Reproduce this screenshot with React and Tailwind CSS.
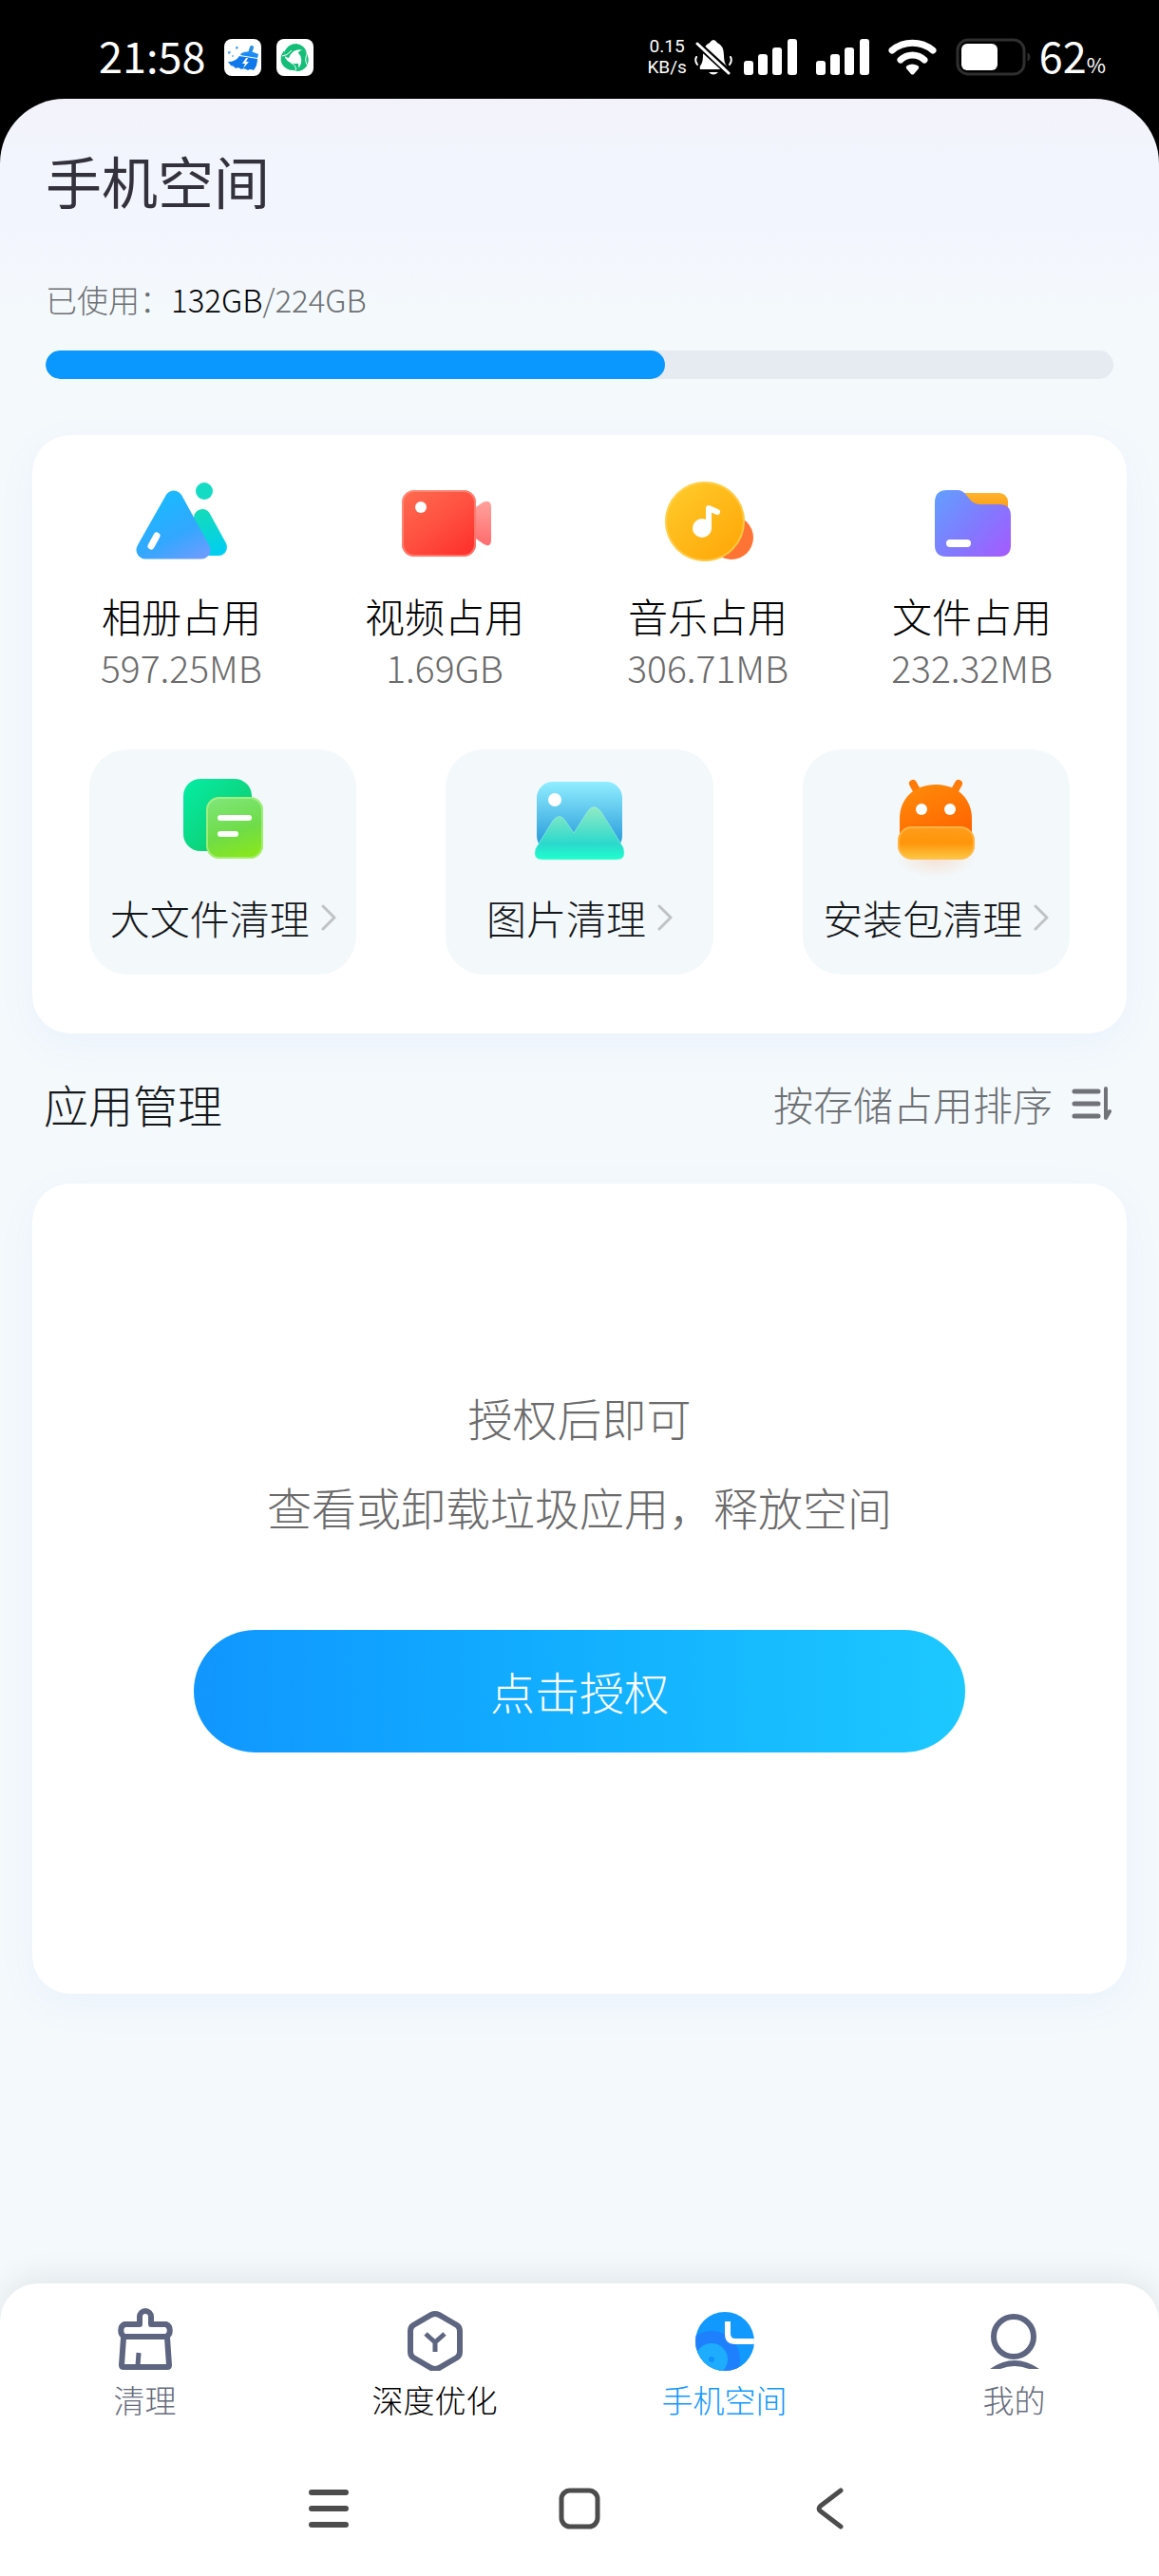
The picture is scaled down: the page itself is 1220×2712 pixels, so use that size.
import React, { useState } from "react";

const STORAGE = { used: 132, total: 224, percent: 58 };

function AlbumIcon() {
  return (
    <svg viewBox="0 0 96 82" className="h-[82px] w-24 overflow-visible" aria-hidden="true">
      <defs>
        <linearGradient id="albumBlue" gradientUnits="userSpaceOnUse" x1="28" y1="8" x2="66" y2="82">
          <stop offset="0" stopColor="#16bbff" />
          <stop offset="0.6" stopColor="#33a7ff" />
          <stop offset="1" stopColor="#6d9cff" />
        </linearGradient>
        <linearGradient id="albumGreen" gradientUnits="userSpaceOnUse" x1="70" y1="28" x2="88" y2="78">
          <stop offset="0" stopColor="#14dcb8" />
          <stop offset="1" stopColor="#00cdf5" />
        </linearGradient>
      </defs>
      <circle cx="72" cy="9" r="9" fill="#14dcc4" />
      <path d="M70 37L87 68H72Z" fill="url(#albumGreen)" stroke="url(#albumGreen)" strokeWidth="18" strokeLinejoin="round" />
      <path d="M40 18L10 71H69Z" fill="url(#albumBlue)" stroke="url(#albumBlue)" strokeWidth="19" strokeLinejoin="round" />
      <path d="M22 56L16 67" stroke="#fff" strokeWidth="7" strokeLinecap="round" />
    </svg>
  );
}

function VideoIcon() {
  return (
    <svg viewBox="0 0 96 82" className="h-[82px] w-24 overflow-visible" aria-hidden="true">
      <defs>
        <linearGradient id="videoBody" x1="0.1" y1="0" x2="0.9" y2="1">
          <stop offset="0" stopColor="#ff6a4f" />
          <stop offset="0.5" stopColor="#ff5040" />
          <stop offset="1" stopColor="#fd2f2b" />
        </linearGradient>
        <linearGradient id="videoLens" x1="0" y1="0" x2="0" y2="1">
          <stop offset="0" stopColor="#ffa19b" />
          <stop offset="1" stopColor="#ff6c6e" />
        </linearGradient>
      </defs>
      <path d="M78 28L88 21Q97 17 97 26V60Q97 70 88 64L78 57Z" fill="url(#videoLens)" />
      <rect x="3" y="8" width="78" height="70" rx="13" fill="url(#videoBody)" />
      <rect x="4" y="9" width="76" height="68" rx="12" fill="none" stroke="#ff9c8f" strokeOpacity="0.6" strokeWidth="2" />
      <circle cx="23" cy="26" r="6" fill="#fff" />
    </svg>
  );
}

function MusicIcon() {
  return (
    <svg viewBox="0 0 96 82" className="h-[82px] w-24 overflow-visible" aria-hidden="true">
      <defs>
        <linearGradient id="musicDisc" x1="0.1" y1="0.1" x2="0.8" y2="0.9">
          <stop offset="0" stopColor="#ffc928" />
          <stop offset="1" stopColor="#ffaa0b" />
        </linearGradient>
      </defs>
      <circle cx="73" cy="58" r="23" fill="#ff7434" />
      <circle cx="45" cy="41" r="42" fill="url(#musicDisc)" />
      <circle cx="45" cy="41" r="41" fill="none" stroke="#ffd966" strokeOpacity="0.6" strokeWidth="2" />
      <circle cx="42" cy="48" r="10" fill="#fff" />
      <path d="M49 48V27L58 31" fill="none" stroke="#fff" strokeWidth="6" strokeLinejoin="round" strokeLinecap="round" />
    </svg>
  );
}

function FileIcon() {
  return (
    <svg viewBox="0 0 96 82" className="h-[82px] w-24 overflow-visible" aria-hidden="true">
      <defs>
        <linearGradient id="fileFront" x1="0" y1="0.1" x2="1" y2="0.9">
          <stop offset="0" stopColor="#649cff" />
          <stop offset="0.55" stopColor="#8279ff" />
          <stop offset="1" stopColor="#a35cff" />
        </linearGradient>
        <linearGradient id="fileBack" x1="0" y1="0" x2="0" y2="1">
          <stop offset="0" stopColor="#ffb42c" />
          <stop offset="1" stopColor="#f58a06" />
        </linearGradient>
      </defs>
      <rect x="32" y="11" width="54" height="30" rx="9" fill="url(#fileBack)" />
      <path
        d="M9 21Q9 8 22 8H33Q38 8 42 13L47 19Q51 23 57 23H77Q89 23 89 35V66Q89 78 77 78H21Q9 78 9 66Z"
        fill="url(#fileFront)"
      />
      <rect x="21" y="60" width="26" height="8" rx="4" fill="#fff" />
    </svg>
  );
}

function BigFileIcon() {
  return (
    <svg viewBox="0 0 96 84" className="h-[84px] w-24 overflow-visible" aria-hidden="true">
      <defs>
        <linearGradient id="bigBack" x1="0" y1="0.1" x2="0.9" y2="1">
          <stop offset="0" stopColor="#06eba2" />
          <stop offset="1" stopColor="#10c666" />
        </linearGradient>
        <linearGradient id="bigFront" x1="0.2" y1="0" x2="0.5" y2="1">
          <stop offset="0" stopColor="#7ee678" />
          <stop offset="0.6" stopColor="#6fdc48" />
          <stop offset="1" stopColor="#86e620" />
        </linearGradient>
      </defs>
      <rect x="6" y="0" width="72" height="76" rx="18" fill="url(#bigBack)" />
      <rect x="30" y="19" width="60" height="65" rx="14" fill="url(#bigFront)" />
      <rect x="31" y="20" width="58" height="63" rx="13" fill="none" stroke="#b2f48c" strokeOpacity="0.7" strokeWidth="2" />
      <path d="M45 41H75M45 58H61" stroke="#fff" strokeWidth="6" strokeLinecap="round" />
    </svg>
  );
}

function PictureIcon() {
  return (
    <svg viewBox="0 0 96 84" className="h-[84px] w-24 overflow-visible" aria-hidden="true">
      <defs>
        <linearGradient id="picSky" x1="0" y1="0" x2="0" y2="1">
          <stop offset="0" stopColor="#90eeff" />
          <stop offset="0.45" stopColor="#5cc4ec" />
          <stop offset="0.85" stopColor="#2b9fdc" />
          <stop offset="1" stopColor="#2b9fdc" />
        </linearGradient>
        <linearGradient id="picHill" x1="0" y1="0" x2="0" y2="1">
          <stop offset="0" stopColor="#92eac4" />
          <stop offset="0.7" stopColor="#2bd9cd" />
          <stop offset="1" stopColor="#1effcd" />
        </linearGradient>
      </defs>
      <rect x="3" y="3" width="90" height="74" rx="17" fill="url(#picSky)" />
      <circle cx="22" cy="22" r="7" fill="#fff" />
      <path
        d="M2 73L20 44Q27 35 33 44L42 57L56 35Q63 24 71 35L94 72Q98 85 87 85H9Q-2 85 2 73Z"
        fill="url(#picHill)"
        stroke="#a6f7de"
        strokeOpacity="0.5"
      />
    </svg>
  );
}

function PackageIcon() {
  return (
    <svg viewBox="0 0 96 84" className="h-[84px] w-24 overflow-visible" aria-hidden="true">
      <defs>
        <linearGradient id="pkgHead" x1="0.2" y1="0" x2="0.8" y2="1">
          <stop offset="0" stopColor="#ff8a0a" />
          <stop offset="1" stopColor="#ff6400" />
        </linearGradient>
        <linearGradient id="pkgBase" x1="0" y1="0" x2="0" y2="1">
          <stop offset="0" stopColor="#ff9d1c" />
          <stop offset="0.5" stopColor="#ff950a" />
          <stop offset="1" stopColor="#fbca45" />
        </linearGradient>
        <radialGradient id="pkgGlow">
          <stop offset="0" stopColor="#ff8a3c" stopOpacity="0.2" />
          <stop offset="1" stopColor="#ff8a3c" stopOpacity="0" />
        </radialGradient>
      </defs>
      <ellipse cx="48" cy="84" rx="42" ry="20" fill="url(#pkgGlow)" />
      <path d="M24 5L29 14M72 5L67 14" stroke="#ff7a08" strokeWidth="8" strokeLinecap="round" />
      <path d="M10 60V42C10 20 26 6 48 6S86 20 86 42V60Z" fill="url(#pkgHead)" />
      <circle cx="33" cy="32" r="6" fill="#fff" />
      <circle cx="63" cy="32" r="6" fill="#fff" />
      <rect x="8" y="50" width="81" height="35" rx="15" fill="url(#pkgBase)" />
      <rect x="9" y="51" width="79" height="33" rx="14" fill="none" stroke="#ffbe55" strokeOpacity="0.7" strokeWidth="2" />
    </svg>
  );
}

function Chevron() {
  return (
    <svg viewBox="0 0 16 28" className="h-7 w-4" fill="none" aria-hidden="true">
      <path d="M2 2L14 14L2 26" stroke="#bfc3c6" strokeWidth="3" strokeLinecap="round" strokeLinejoin="round" />
    </svg>
  );
}

function SortIcon() {
  return (
    <svg viewBox="0 0 42 36" className="h-9 w-[42px]" fill="none" stroke="#707478" strokeLinecap="round" aria-hidden="true">
      <path d="M3 5H28M3 18H28M3 31H28" strokeWidth="5" />
      <path d="M36 2V33L40 26" strokeWidth="4" strokeLinejoin="round" />
    </svg>
  );
}

function CleanIcon() {
  return (
    <svg viewBox="0 0 64 66" className="h-[66px] w-16" fill="none" stroke="currentColor" strokeWidth="6" aria-hidden="true">
      <path d="M26 9V17H10A6 7 0 0 0 10 30H54A6 7 0 0 0 54 17H38V9A6 6 0 0 0 26 9Z" strokeLinejoin="round" />
      <path d="M9 31L7 60Q7 62 9 62H55Q57 62 57 60L55 31" />
      <path d="M25 47L24 61" strokeWidth="5" />
    </svg>
  );
}

function OptimizeIcon() {
  return (
    <svg viewBox="0 0 64 66" className="h-[66px] w-16" fill="none" stroke="currentColor" aria-hidden="true">
      <path
        d="M28 7Q32 5 36 7L55 18Q58 20 58 24V46Q58 50 55 52L36 63Q32 65 28 63L9 52Q6 50 6 46V24Q6 20 9 18Z"
        strokeWidth="6"
      />
      <path d="M22 27L32 36L42 27M32 35V46" strokeWidth="5" />
    </svg>
  );
}

function SpaceIcon() {
  return (
    <svg viewBox="0 0 64 66" className="h-[66px] w-16" aria-hidden="true">
      <defs>
        <clipPath id="spaceDisc">
          <circle cx="32" cy="35" r="31" />
        </clipPath>
      </defs>
      <g clipPath="url(#spaceDisc)">
        <rect width="64" height="66" fill="#1199fe" />
        <circle cx="18" cy="54" r="30" fill="#1f80fd" />
        <circle cx="18" cy="54" r="17" fill="#1eacff" />
        <circle cx="18" cy="54" r="3" fill="#1190fb" />
        <path d="M35 14V27Q35 35 43 35H64" fill="none" stroke="#fff" strokeWidth="6" />
      </g>
    </svg>
  );
}

function MineIcon() {
  return (
    <svg viewBox="0 0 64 66" className="h-[66px] w-16" aria-hidden="true">
      <circle cx="31" cy="30" r="21" fill="none" stroke="currentColor" strokeWidth="6" />
      <path d="M6 64Q32 46 58 64H47Q32 58 17 64Z" fill="currentColor" />
    </svg>
  );
}

function BroomAppIcon() {
  return (
    <svg viewBox="0 0 39 39" className="size-[39px] rounded-lg bg-white" aria-hidden="true">
      <path d="M27 15L29 9" stroke="#2b8fe0" strokeWidth="4" strokeLinecap="round" />
      <path d="M18 15Q26 11 36 16L35 20L17 17Z" fill="#1c8cf5" />
      <path d="M16 18L35 21Q35 28 31 33Q27 31 25 33Q21 30 18 32Q15 29 12 31Q10 28 7 28L4 24Q12 24 16 18Z" fill="#0f79ec" />
      <path d="M23 20L19 26H22L20 31L26 24H23L25 20Z" fill="#fff" />
      <path d="M13 8V11M12 9H15M5 13V16M4 14H7M9 17V19" stroke="#2a93f0" strokeWidth="1" />
    </svg>
  );
}

function SwirlAppIcon() {
  return (
    <svg viewBox="0 0 39 39" className="size-[39px] rounded-lg bg-white" aria-hidden="true">
      <g fill="#14bd78">
        <path d="M8 14Q12 5 21 5Q29 6 32 14Q25 9 18 13Q14 16 13 20Q7 19 8 14Z" />
        <path d="M8 14Q12 5 21 5Q29 6 32 14Q25 9 18 13Q14 16 13 20Q7 19 8 14Z" transform="rotate(120 19.5 20)" />
        <path d="M8 14Q12 5 21 5Q29 6 32 14Q25 9 18 13Q14 16 13 20Q7 19 8 14Z" transform="rotate(240 19.5 20)" />
      </g>
      <path d="M6 18Q11 18 16 12M33 14Q29 21 32 27M20 34Q22 28 15 25" fill="none" stroke="#fff" strokeWidth="1" />
    </svg>
  );
}

function MutedBellIcon() {
  return (
    <svg viewBox="0 0 40 38" className="h-[38px] w-10" fill="none" aria-hidden="true">
      <path d="M6 32Q5 29 7 27Q9 24 9 17Q9 7 16 4Q20 -2 24 4Q31 7 31 17Q31 24 33 27Q35 29 34 32Z" fill="#fff" />
      <path d="M15 35H25Q20 40 15 35Z" fill="#fff" />
      <path d="M2 19Q0 23 3 27M38 19Q40 23 37 27" stroke="#fff" strokeWidth="2" strokeLinecap="round" />
      <path d="M2 4L38 37" stroke="#000" strokeWidth="7" />
      <path d="M3 5L36 36" stroke="#fff" strokeWidth="3" strokeLinecap="round" />
    </svg>
  );
}

function SignalIcon() {
  return (
    <svg viewBox="0 0 56 38" className="h-[38px] w-14" fill="#fff" aria-hidden="true">
      <rect x="0" y="23" width="10" height="15" rx="3" />
      <rect x="15" y="16" width="10" height="22" rx="3" />
      <rect x="30" y="9" width="10" height="29" rx="3" />
      <rect x="46" y="0" width="10" height="38" rx="3" />
    </svg>
  );
}

function WifiIcon() {
  return (
    <svg viewBox="0 0 51 38" className="h-[38px] w-[51px]" fill="none" aria-hidden="true">
      <path d="M4 12A34 34 0 0 1 47 12" stroke="#fff" strokeWidth="7" strokeLinecap="round" />
      <path d="M13 22A18 18 0 0 1 38 22" stroke="#fff" strokeWidth="7" strokeLinecap="round" />
      <path d="M19 31Q18 29 20 28Q25 25 31 28Q33 29 32 31L27 37Q26 38 24 37Z" fill="#fff" />
    </svg>
  );
}

function BatteryIcon() {
  return (
    <svg viewBox="0 0 80 40" className="h-10 w-20" fill="none" aria-hidden="true">
      <rect x="2" y="2" width="70" height="36" rx="11" stroke="#2f2f2f" strokeWidth="3" />
      <rect x="6" y="6" width="38" height="28" rx="6" fill="#fff" />
      <path d="M76 16Q80 20 76 24Z" fill="#2f2f2f" stroke="#2f2f2f" strokeWidth="1" />
    </svg>
  );
}

function StatusBar() {
  return (
    <header className="flex h-[104px] items-center justify-between pt-4 pl-[104px] pr-14 text-white">
      <div className="flex items-center">
        <time className="mr-5 pb-1 text-[45px] leading-[48px]">21:58</time>
        <div className="flex gap-4">
          <BroomAppIcon />
          <SwirlAppIcon />
        </div>
      </div>
      <div className="flex items-center">
        <div className="mr-2 text-center font-[Roboto,sans-serif] text-[19px] leading-[22px]">
          <p>0.15</p>
          <p>KB/s</p>
        </div>
        <MutedBellIcon />
        <div className="ml-3 mr-5 flex items-center gap-5">
          <SignalIcon />
          <SignalIcon />
          <WifiIcon />
        </div>
        <BatteryIcon />
        <p className="ml-2 flex items-baseline pb-1 text-[45px] leading-[48px]">
          62<span className="text-[22px] leading-none">%</span>
        </p>
      </div>
    </header>
  );
}

const USAGES = [
  { label: "相册占用", value: "597.25MB", Icon: AlbumIcon },
  { label: "视频占用", value: "1.69GB", Icon: VideoIcon },
  { label: "音乐占用", value: "306.71MB", Icon: MusicIcon },
  { label: "文件占用", value: "232.32MB", Icon: FileIcon },
];

const TOOLS = [
  { label: "大文件清理", Icon: BigFileIcon },
  { label: "图片清理", Icon: PictureIcon },
  { label: "安装包清理", Icon: PackageIcon },
];

const TABS = [
  { id: "clean", label: "清理", color: "text-[#5d6580]", Icon: CleanIcon, text: "text-[#666c7c]" },
  { id: "optimize", label: "深度优化", color: "text-[#5d6580]", Icon: OptimizeIcon, text: "text-black" },
  { id: "space", label: "手机空间", color: "text-[#1199fe]", Icon: SpaceIcon, text: "text-[#1199fe]" },
  { id: "mine", label: "我的", color: "text-[#5d6580]", Icon: MineIcon, text: "text-[#666c7c]" },
];

export default function App() {
  const [tab, setTab] = useState("space");

  return (
    <div className="flex min-h-screen flex-col bg-black font-['Noto_Sans_CJK_SC',sans-serif]">
      <StatusBar />

      <div className="flex flex-1 flex-col rounded-t-[68px] bg-[linear-gradient(to_bottom,#f3f2fa_0px,#f2f5fd_60px,#f3f5fe_140px,#f4f9fc_220px)] font-light">
        <main className="flex-1 px-[34px] pt-[50px]">
          <section className="px-[14px]">
            <h1 className="text-[59px] leading-[72px] font-normal text-[#33313b]">手机空间</h1>
            <p className="mt-[69px] text-[33px] leading-10 text-[#6d7073]">
              已使用：<span className="text-black">{STORAGE.used}GB</span>/{STORAGE.total}GB
            </p>
            <div
              role="progressbar"
              aria-label="已使用"
              aria-valuenow={STORAGE.percent}
              className="mt-[34px] h-[30px] overflow-hidden rounded-full bg-[#e6eaf1]"
            >
              <div className="h-full rounded-full bg-[#0b98fe]" style={{ width: `${STORAGE.percent}%` }} />
            </div>
          </section>

          {/* Storage usage */}
          <section className="mt-[59px] rounded-[40px] bg-white px-[60px] pt-[50px] pb-[62px] shadow-[0_12px_40px_rgba(90,130,255,0.06)]">
            <ul className="flex justify-between pr-[18px] pl-3">
              {USAGES.map(({ label, value, Icon }) => (
                <li key={label} className="flex flex-col items-center">
                  <Icon />
                  <p className="mt-8 text-[42px] leading-[52px] text-black">{label}</p>
                  <p className="mt-1 text-[39px] leading-[48px] text-[#6b6b6b]">{value}</p>
                </li>
              ))}
            </ul>

            <div className="mt-[63px] grid grid-cols-3 gap-[94px]">
              {TOOLS.map(({ label, Icon }) => (
                <button key={label} type="button" className="flex flex-col items-center rounded-[40px] bg-[#f3f8fb] pt-[31px] pb-[34px]">
                  <Icon />
                  <span className="mt-9 flex items-center gap-3 whitespace-nowrap text-[42px] leading-[52px] text-[#14171a]">
                    {label}
                    <Chevron />
                  </span>
                </button>
              ))}
            </div>
          </section>

          {/* App management */}
          <div className="mt-11 flex items-center justify-between pr-4 pl-3">
            <h2 className="text-[47px] leading-[60px] font-light text-[#14171a]">应用管理</h2>
            <button type="button" className="flex items-center gap-5 text-[42px] leading-[52px] text-[#6d7073]">
              按存储占用排序
              <SortIcon />
            </button>
          </div>

          <section className="mt-[54px] flex flex-col items-center rounded-[40px] bg-white pt-[199px] pb-[254px] shadow-[0_12px_40px_rgba(90,130,255,0.06)]">
            <p className="text-center text-[47px] leading-[94px] text-[#6b6b6b]">
              授权后即可
              <br />
              查看或卸载垃圾应用，释放空间
            </p>
            <button
              type="button"
              className="mt-[83px] h-[129px] w-[812px] max-w-full rounded-full bg-linear-to-r from-[#1196ff] to-[#1dc8ff] text-[47px] text-white"
            >
              点击授权
            </button>
          </section>
        </main>

        <footer className="rounded-t-[40px] bg-white pt-[26px] pb-[49px] shadow-[0_-6px_32px_rgba(0,0,0,0.08)]">
          <nav className="grid grid-cols-4">
            {TABS.map(({ id, label, color, text, Icon }) => (
              <button
                key={id}
                type="button"
                aria-current={tab === id ? "page" : undefined}
                onClick={() => setTab(id)}
                className="flex flex-col items-center"
              >
                <span className={color}>
                  <Icon />
                </span>
                <span className={`mt-[10px] text-[33px] leading-10 ${text}`}>{label}</span>
              </button>
            ))}
          </nav>

          {/* System navigation */}
          <div className="mx-auto mt-[73px] flex w-[65%] justify-around">
            <button type="button" aria-label="最近任务">
              <svg viewBox="0 0 44 44" className="size-11" stroke="#4c4c4c" strokeWidth="6" strokeLinecap="round">
                <path d="M4 5H40M4 22H40M4 39H40" />
              </svg>
            </button>
            <button type="button" aria-label="主屏幕">
              <svg viewBox="0 0 44 44" className="size-11" fill="none" stroke="#4c4c4c" strokeWidth="5">
                <rect x="3" y="3" width="38" height="38" rx="9" />
              </svg>
            </button>
            <button type="button" aria-label="返回">
              <svg viewBox="0 0 44 44" className="size-11" fill="none" stroke="#4c4c4c" strokeWidth="5" strokeLinecap="round">
                <path d="M33 3L12 19Q8 22 12 25L33 41" />
              </svg>
            </button>
          </div>
        </footer>
      </div>
    </div>
  );
}
